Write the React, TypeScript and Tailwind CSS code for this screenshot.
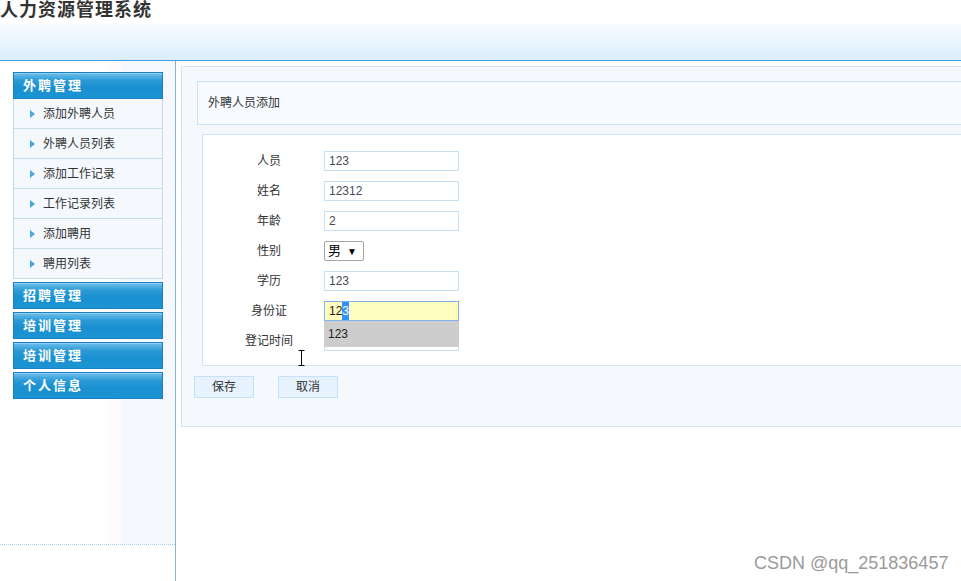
import React from "react";

const font = "font-['Liberation_Sans','Noto_Sans_CJK_SC',sans-serif]";

function MenuHeader({ title, first }: { title: string; first?: boolean }) {
  return (
    <div
      className={`h-[27px] border border-[#1c7fc2] bg-[linear-gradient(#6fc0ea,#2b9ad7_30%,#1990d0_60%,#1c94d3)] shadow-[inset_0_1px_0_#8fd0f2] flex items-center pl-[9px] pt-[1px] text-white text-[13px] font-bold tracking-[2px] ${first ? "" : "mt-[3px]"}`}
    >
      {title}
    </div>
  );
}

function MenuItem({ label }: { label: string }) {
  return (
    <div className="h-[30px] border-x border-b border-x-[#c4d9e9] border-b-[#c9dde9] bg-[#f5f9fe] flex items-center pl-[16px] text-[12px] text-[#333]">
      <svg width="5" height="8" viewBox="0 0 5 8" className="mr-[8px]">
        <path d="M0 0 L5 4 L0 8 Z" fill="#47a7e2" />
      </svg>
      {label}
    </div>
  );
}

function Row({ label, children }: { label: string; children?: React.ReactNode }) {
  return (
    <div className="h-[30px] flex items-center">
      <div className="w-[110px] text-center text-[12px] text-[#333]">{label}</div>
      {children}
    </div>
  );
}

function Input({ value }: { value: string }) {
  return (
    <div className="w-[135px] h-[20px] border border-[#c7e0f6] bg-white flex items-center pl-[4px] text-[12px] text-[#4a4a5a]">
      {value}
    </div>
  );
}

export default function App() {
  return (
    <div className={`w-[961px] h-[581px] overflow-hidden relative bg-white ${font}`}>
      {/* header */}
      <div className="h-[24px] flex items-start">
        <div className="text-[18px] leading-[20px] font-bold text-[#333] tracking-[1px]">人力资源管理系统</div>
      </div>
      <div className="h-[37px] bg-[linear-gradient(#f8fbff,#e9f4fe_55%,#dbedfd)] border-b border-[#3f9de0]" />

      {/* main */}
      <div className="flex h-[520px]">
        {/* sidebar */}
        <div className="w-[176px] shrink-0 border-r border-[#89b2d3]">
          <div className="h-[484px] border-b border-dotted border-[#a9d0e6] bg-[linear-gradient(to_right,#ffffff_0px,#ffffff_108px,#fffbfd_110px,#fffbfd_120px,#f4f9fd_123px,#f5f9fe_126px,#f5f9fe_100%)] pl-[13px] pt-[11px]">
            <div className="w-[150px]">
              <MenuHeader title="外聘管理" first />
              <MenuItem label="添加外聘人员" />
              <MenuItem label="外聘人员列表" />
              <MenuItem label="添加工作记录" />
              <MenuItem label="工作记录列表" />
              <MenuItem label="添加聘用" />
              <MenuItem label="聘用列表" />
              <MenuHeader title="招聘管理" />
              <MenuHeader title="培训管理" />
              <MenuHeader title="培训管理" />
              <MenuHeader title="个人信息" />
            </div>
          </div>
        </div>

        {/* content */}
        <div className="flex-1 overflow-hidden pl-[5px] pt-[5px]">
          <div className="w-[900px] border border-[#d3e6f5] bg-[#f5f9fe] pl-[15px] pt-[14px] pb-[28px]">
            <div className="h-[44px] border border-[#cae1f5] bg-[#f7fafe] flex items-center pl-[10px] text-[12px] text-[#333]">
              外聘人员添加
            </div>
            <div className="ml-[5px] mt-[9px] h-[232px] border border-[#cde3f6] bg-white pt-[11px] pl-[11px] relative">
              <Row label="人员"><Input value="123" /></Row>
              <Row label="姓名"><Input value="12312" /></Row>
              <Row label="年龄"><Input value="2" /></Row>
              <Row label="性别">
                <div className="w-[40px] h-[20px] border border-[#a6a6a6] rounded-[2px] bg-white flex items-center pl-[3px] text-[13px] text-black">
                  <span>男</span>
                  <span className="ml-[6px] text-[10px]">▼</span>
                </div>
              </Row>
              <Row label="学历"><Input value="123" /></Row>
              <Row label="身份证">
                <div className="w-[135px] h-[20px] border border-[#7fb2ee] bg-[#fefdbd] flex items-center pl-[4px] text-[12px] text-[#222]">
                  <span>12</span>
                  <span className="bg-[#3391ff] text-white">3</span>
                </div>
              </Row>
              <Row label="登记时间"><Input value="" /></Row>
              {/* autocomplete dropdown */}
              <div className="absolute left-[121px] top-[186px] w-[135px] h-[26px] bg-[#cdcdcd] flex items-center pl-[4px] text-[12px] text-[#222]">
                123
              </div>
              {/* I-beam cursor */}
              <svg className="absolute left-[95px] top-[215px]" width="7" height="16" viewBox="0 0 7 16">
                <path d="M0.5 0.5 H6.5 M3.5 0.5 V15.5 M0.5 15.5 H6.5" stroke="#000" strokeWidth="1" fill="none" />
              </svg>
            </div>
            <div className="flex mt-[10px] -ml-[3px] gap-[24px]">
              <div className="w-[60px] h-[22px] border border-[#c6e0f7] bg-[#e6f2fd] flex items-center justify-center text-[12px] text-[#333]">保存</div>
              <div className="w-[60px] h-[22px] border border-[#c6e0f7] bg-[#e6f2fd] flex items-center justify-center text-[12px] text-[#333]">取消</div>
            </div>
          </div>
        </div>
      </div>

      <div className="absolute left-[754px] top-[552px] text-[18px] leading-[22px] text-[#9a9a9a] font-['Liberation_Sans',sans-serif]">
        CSDN @qq_251836457
      </div>
    </div>
  );
}
